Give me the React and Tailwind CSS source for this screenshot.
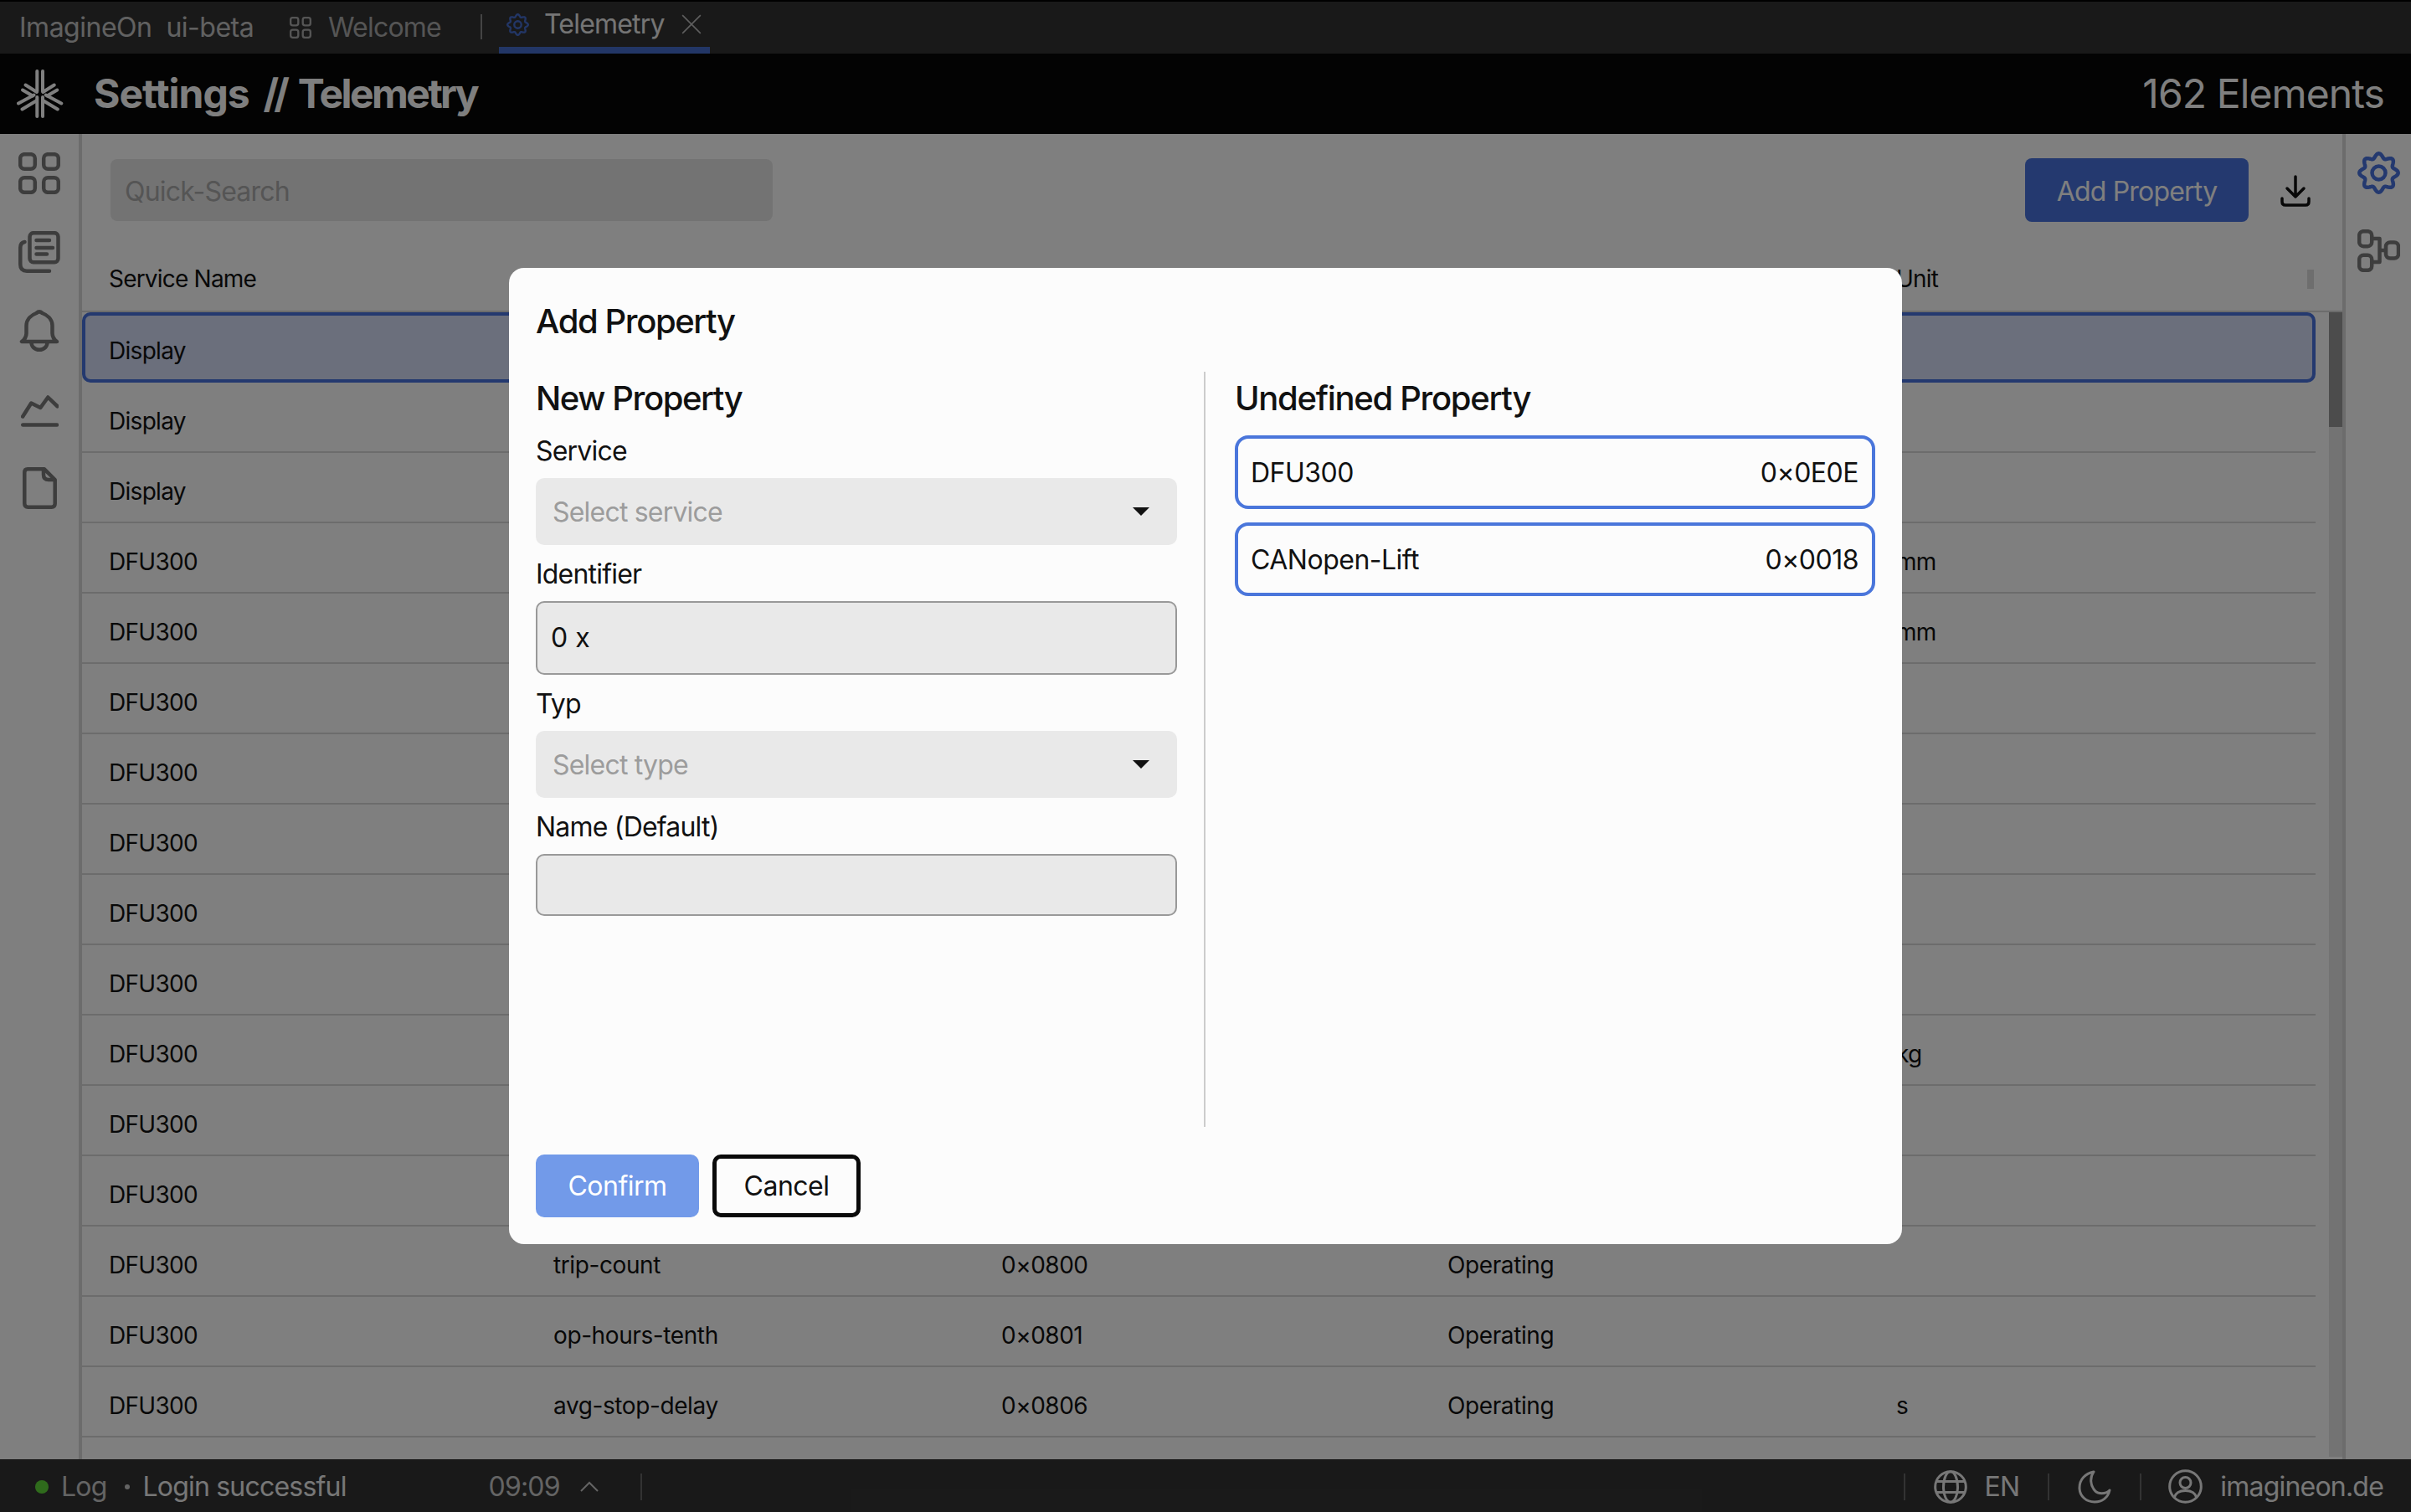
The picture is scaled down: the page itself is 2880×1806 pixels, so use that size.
const FONT = "font-['Inter',sans-serif]";

// the modal covers the middle columns of the upper rows
const ROWS = [
  ["Display", "", "", "", ""],
  ["Display", "", "", "", ""],
  ["Display", "", "", "", ""],
  ["DFU300", "", "", "", "mm"],
  ["DFU300", "", "", "", "mm"],
  ["DFU300", "", "", "", ""],
  ["DFU300", "", "", "", ""],
  ["DFU300", "", "", "", ""],
  ["DFU300", "", "", "", ""],
  ["DFU300", "", "", "", ""],
  ["DFU300", "", "", "", "kg"],
  ["DFU300", "", "", "", ""],
  ["DFU300", "", "", "", ""],
  ["DFU300", "trip-count", "0×0800", "Operating", ""],
  ["DFU300", "op-hours-tenth", "0×0801", "Operating", ""],
  ["DFU300", "avg-stop-delay", "0×0806", "Operating", "s"],
  ["", "", "", "", ""],
];

const gearPath = (() => {
  const pts = [];
  for (let i = 0; i < 240; i++) {
    const t = (i / 240) * Math.PI * 2;
    const r = 20.5 + 2.7 * Math.cos(8 * t);
    pts.push(`${(25.5 + r * Math.sin(t)).toFixed(2)} ${(25.5 - r * Math.cos(t)).toFixed(2)}`);
  }
  return "M" + pts.join("L") + "Z";
})();

const Gear = ({ className, sw = 4.5 }) => (
  <svg viewBox="0 0 51 51" fill="none" stroke="currentColor" strokeWidth={sw} className={className}>
    <path d={gearPath} strokeLinejoin="round" />
    <circle cx="25.5" cy="25.5" r="8" />
  </svg>
);

const GridIcon = ({ className, sw = 4.5 }) => (
  <svg viewBox="0 0 50 50" fill="none" stroke="currentColor" strokeWidth={sw} className={className}>
    <rect x="2.2" y="2.2" width="17.6" height="17.6" rx="5" />
    <rect x="30.2" y="2.2" width="17.6" height="17.6" rx="5" />
    <rect x="2.2" y="30.2" width="17.6" height="17.6" rx="5" />
    <rect x="30.2" y="30.2" width="17.6" height="17.6" rx="5" />
  </svg>
);

const CopyIcon = () => (
  <svg viewBox="0 0 50 50" fill="none" stroke="currentColor" strokeWidth="4.5" strokeLinecap="round" className="w-[50px] h-[50px]">
    <rect x="13.5" y="2.2" width="34" height="35" rx="4.5" />
    <path d="M21.5 11H37M21.5 20H41M21.5 27.5H34" />
    <path d="M7.5 13Q2.3 14 2.3 19.5V40Q2.3 47.7 10 47.7H37" />
  </svg>
);

const BellIcon = () => (
  <svg viewBox="0 0 50 50" fill="none" stroke="currentColor" strokeWidth="4.5" strokeLinecap="round" strokeLinejoin="round" className="w-[50px] h-[50px]">
    <path d="M4 38H46Q40.5 34 40.5 28V19C40.5 11 34 6 28.5 4Q25 .8 21.5 4C16 6 9.5 11 9.5 19V28Q9.5 34 4 38Z" />
    <path d="M15.5 39C15.5 44 19.5 47.7 25 47.7C30.5 47.7 34.5 44 34.5 39" />
  </svg>
);

const ChartIcon = () => (
  <svg viewBox="0 0 45 38" fill="none" stroke="currentColor" strokeWidth="4.5" strokeLinecap="round" strokeLinejoin="round" className="w-[45px] h-[38px] mt-[8px]">
    <path d="M2.2 25.5L12.3 9.5L23.3 15L32.3 2.500L43.5 13.3" />
    <path d="M2.2 35.5H43" />
  </svg>
);

const FileIcon = () => (
  <svg viewBox="0 0 41 50" fill="none" stroke="currentColor" strokeWidth="4.5" strokeLinecap="round" strokeLinejoin="round" className="w-[41px] h-[50px] mt-[4px]">
    <path d="M6 2.3H26L38.7 15V43.5Q38.7 47.7 34.5 47.7H6.5Q2.3 47.7 2.3 43.5V6.5Q2.3 2.3 6 2.3Z" />
    <path d="M25 4V9Q25 15 31 15H37" />
  </svg>
);

const FlowIcon = () => (
  <svg viewBox="0 0 51 51" fill="none" stroke="currentColor" strokeWidth="4.5" strokeLinejoin="round" className="w-[51px] h-[51px]">
    <rect x="2.2" y="2.2" width="15" height="18" rx="5" />
    <rect x="2.2" y="30.8" width="15" height="18" rx="5" />
    <rect x="34" y="15.5" width="15" height="19" rx="5" />
    <path d="M17 11H26.5V39H17M26.5 25H34" />
  </svg>
);

const Logo = () => (
  <svg viewBox="0 0 56 58" fill="none" stroke="currentColor" strokeWidth="4" strokeLinecap="round" className="w-[56px] h-[58px]">
    <path d="M24.300 2V26M31 2V26M24.300 33V56M31 33V56" />
    <path d="M10.500 18.500L24 27M7 24.500L19 31.500M44.800 18.500L31.300 27M48.300 24.500L36.300 31.500" />
    <path d="M2 40.500L20.500 30.500M6.500 47.500L24 37M53.300 40.500L34.800 30.500M48.800 47.500L31.300 37" />
  </svg>
);

const Sep = ({ className }) => <div className={`w-[2px] h-[32px] bg-[#666666] ${className}`} />;

const Field = ({ label, children }) => (
  <div className="mt-[15px]">
    <div className="h-[40px] flex items-center text-[32px] tracking-[-0.8px] text-[#111111]">{label}</div>
    <div className="mt-[12px]">{children}</div>
  </div>
);

const SelectBox = ({ text }) => (
  <div className="h-[80px] bg-[#e9e9e9] rounded-[10px] flex items-center justify-between pl-[20px] pr-[33px]">
    <span className="pt-[2px] text-[32px] tracking-[-0.8px] text-[#9c9c9c]">{text}</span>
    <span className="w-0 h-0 border-x-[10px] border-x-transparent border-t-[10px] border-t-[#111111]" />
  </div>
);

const PropCard = ({ name, id }) => (
  <div className="h-[88px] border-[4px] border-[#4a76db] rounded-[16px] flex items-center justify-between pl-[15px] pr-[16px] pt-[1px] text-[32px] tracking-[-0.5px] text-[#111111]">
    <span>{name}</span>
    <span>{id}</span>
  </div>
);

export default function App() {
  return (
    <div className={`relative w-[2880px] h-[1806px] overflow-hidden flex flex-col bg-white ${FONT}`}>
      {/* tab bar */}
      <div className="h-[64px] bg-[#333333] border-t-2 border-t-black flex items-stretch shrink-0 text-[32px] tracking-[-0.8px]">
        <div className="flex items-center pl-[23px] tracking-[-0.5px] text-[#ffffff] opacity-70 w-[346px]">ImagineOn&nbsp; ui-beta</div>
        <div className="flex items-center gap-[20px] w-[228px] text-[#aaaaaa]">
          <GridIcon className="w-[26px] h-[26px]" sw={4.5} />
          Welcome
        </div>
        <div className="w-[2px] h-[30px] mt-[15px] bg-[#888888]" />
        <div className="ml-[20px] w-[252px] border-b-[8px] border-b-[#4873de] flex items-center pl-[9px] text-[#ffffff] opacity-90">
          <Gear className="w-[27px] h-[27px] text-[#4873de] mr-[18px]" sw={4.5} />
          Telemetry
          <svg viewBox="0 0 24 24" fill="none" stroke="#cccccc" strokeWidth="1.5" className="w-[26px] h-[26px] ml-[19px]">
            <path d="M2 2L22 22M22 2L2 22" />
          </svg>
        </div>
      </div>

      {/* page header */}
      <div className="h-[96px] bg-[#060606] flex items-center justify-between shrink-0 pl-[20px] pr-[32px] text-white">
        <div className="flex items-center gap-[36px]">
          <Logo />
          <div className="flex items-center text-[48px] font-bold">
            <span className="tracking-[-1px]">Settings</span>
            <span className="ml-[17px] tracking-[-6px]">//</span>
            <span className="ml-[16px] tracking-[-2.6px]">Telemetry</span>
          </div>
        </div>
        <span className="text-[48px] tracking-[-0.9px]">162 Elements</span>
      </div>

      {/* body */}
      <div className="flex-1 flex min-h-0">
        <div className="w-[98px] shrink-0 border-r-[4px] border-r-[#d8d8d8] flex flex-col items-center gap-[44px] pt-[22px] text-[#7a7a7a]">
          <GridIcon className="w-[50px] h-[50px]" />
          <CopyIcon />
          <BellIcon />
          <ChartIcon />
          <FileIcon />
        </div>

        <div className="flex-1 min-w-0 flex flex-col">
          <div className="h-[213px] shrink-0 flex flex-col">
            <div className="flex items-center justify-between pl-[34px] pr-[38px] pt-[29px]">
              <div className="w-[791px] h-[74px] bg-[#e6e6e6] rounded-[8px] flex items-center px-[17px] pt-[3px] text-[32px] tracking-[-0.8px] text-[#aaaaaa]">Quick-Search</div>
              <div className="flex items-center gap-[38px]">
                <div className="w-[267px] h-[76px] bg-[#4873de] rounded-[8px] flex items-center justify-center pt-[3px] text-[32px] tracking-[-0.8px] text-white">Add Property</div>
                <svg viewBox="0 0 36 38" fill="none" stroke="#111111" strokeWidth="3.5" strokeLinecap="round" strokeLinejoin="round" className="w-[36px] h-[38px] mt-[2px]">
                  <path d="M18 2V26M8 16L18 26L28 16" />
                  <path d="M2 28V32Q2 36 6 36H30Q34 36 34 32V28" />
                </svg>
              </div>
            </div>
            <div className="mt-auto h-[70px] pb-[8px] flex items-center text-[28px] tracking-[-0.8px] text-[#111111] pl-[32px] pr-[34px] border-b-2 border-b-[#d8d8d8]">
              <span className="w-[2135px]">Service Name</span>
              <span className="flex-1">Unit</span>
              <span className="w-[8px] h-[23px] bg-[#dcdcdc]" />
            </div>
          </div>

          <div className="flex-1 min-h-0 flex">
            <div className="flex-1 min-w-0 pr-[16px]">
              {ROWS.map((r, i) => (
                <div
                  key={i}
                  className={
                    i === 0
                      ? "h-[84px] flex items-center pt-[8px] text-[28px] tracking-[-0.7px] text-[#111111] pl-[28px] bg-[#d6def8] border-[4px] border-[#4873de] rounded-[10px]"
                      : "h-[84px] flex items-center pt-[9px] text-[28px] tracking-[-0.7px] text-[#111111] pl-[32px] border-b-2 border-b-[#d8d8d8]"
                  }
                >
                  <span className="w-[531px]">{r[0]}</span>
                  <span className="w-[535px] tracking-[-0.4px]">{r[1]}</span>
                  <span className="w-[533px] tracking-[-0.5px]">{r[2]}</span>
                  <span className="w-[536px] tracking-[-0.4px]">{r[3]}</span>
                  <span>{r[4]}</span>
                </div>
              ))}
            </div>
            <div className="w-[16px] shrink-0 bg-[#e6e6e6] mb-[3px]">
              <div className="h-[137px] bg-[#999999]" />
            </div>
          </div>
        </div>

        <div className="w-[82px] shrink-0 border-l-[4px] border-l-[#d8d8d8] flex flex-col items-center gap-[42px] pt-[21px] text-[#7a7a7a]">
          <Gear className="w-[51px] h-[51px] text-[#4873de]" />
          <FlowIcon />
        </div>
      </div>

      {/* footer */}
      <div className="h-[63px] bg-[#333333] flex items-center shrink-0 pl-[42px] pr-[33px] pt-[2px] text-[32px] tracking-[-0.8px]">
        <span className="w-[16px] h-[16px] rounded-full bg-[#5ed639]" />
        <span className="ml-[15px] text-[#c8c8c8]">Log</span>
        <span className="ml-[21px] w-[6px] h-[6px] rounded-full bg-[#c8c8c8]" />
        <span className="ml-[16px] text-[#eeeeee] w-[413px]">Login successful</span>
        <span className="text-[#c8c8c8]">09:09</span>
        <svg viewBox="0 0 22 13" fill="none" stroke="#c8c8c8" strokeWidth="2" className="w-[22px] h-[13px] ml-[24px]">
          <path d="M1 12L11 2L21 12" />
        </svg>
        <Sep className="ml-[50px]" />
        <div className="flex-1" />
        <Sep />
        <svg viewBox="0 0 40 40" fill="none" stroke="#eeeeee" strokeWidth="3" className="w-[40px] h-[40px] ml-[34px]">
          <circle cx="20" cy="20" r="18.300" />
          <ellipse cx="20" cy="20" rx="8.500" ry="18.300" />
          <path d="M3 13.500H37M3 26.500H37" />
        </svg>
        <span className="ml-[21px] text-[#eeeeee]">EN</span>
        <Sep className="ml-[34px]" />
        <svg viewBox="0 0 40 40" fill="none" stroke="#eeeeee" strokeWidth="3" strokeLinejoin="round" className="w-[40px] h-[40px] ml-[34px]">
          <path d="M19 2C9 4 2 11 2 21C2 31 10 38 20 38C29 38 36 33 38 24C33 29 24 29 20 24C15 18 14 9 19 2Z" />
        </svg>
        <Sep className="ml-[34px]" />
        <svg viewBox="0 0 41 41" fill="none" stroke="#eeeeee" strokeWidth="3" className="w-[41px] h-[41px] ml-[32px]">
          <circle cx="20.500" cy="20.500" r="18.800" />
          <circle cx="20.500" cy="16" r="6.500" />
          <path d="M7 34C9 27 14 25.500 20.500 25.500C27 25.500 32 27 34 34" />
        </svg>
        <span className="ml-[21px] text-[#eeeeee]">imagineon.de</span>
      </div>

      {/* modal overlay */}
      <div className="absolute inset-0 bg-black/50 flex items-start justify-center pt-[320px]">
        <div className="w-[1664px] h-[1166px] bg-[#fcfcfc] rounded-[18px] px-[32px] pt-[32px] flex flex-col">
          <div className="h-[64px] flex items-center text-[40px] font-medium tracking-[-1.4px] text-[#111111]">Add Property</div>
          <div className="mt-[28px] h-[902px] flex">
            <div className="w-[766px]">
              <div className="h-[60px] pt-[4px] flex items-center text-[40px] font-medium tracking-[-1.4px] text-[#111111]">New Property</div>
              <Field label="Service"><SelectBox text="Select service" /></Field>
              <Field label="Identifier">
                <div className="h-[88px] bg-[#e9e9e9] border-2 border-[#999999] rounded-[10px] flex items-center px-[16px] text-[32px] text-[#111111]">0 x</div>
              </Field>
              <Field label="Typ"><SelectBox text="Select type" /></Field>
              <Field label="Name (Default)">
                <div className="h-[74px] bg-[#e9e9e9] border-2 border-[#999999] rounded-[10px]" />
              </Field>
            </div>
            <div className="w-[2px] bg-[#cccccc] ml-[32px] mr-[35px]" />
            <div className="flex-1">
              <div className="h-[64px] flex items-center text-[40px] font-medium tracking-[-1.3px] text-[#111111]">Undefined Property</div>
              <div className="mt-[12px] flex flex-col gap-[16px]">
                <PropCard name="DFU300" id="0×0E0E" />
                <PropCard name="CANopen-Lift" id="0×0018" />
              </div>
            </div>
          </div>
          <div className="mt-[33px] flex gap-[16px]">
            <div className="w-[195px] h-[75px] bg-[#729ae9] rounded-[10px] flex items-center justify-center text-[32px] tracking-[-0.5px] text-white">Confirm</div>
            <div className="w-[177px] h-[75px] border-[5px] border-[#0a0a0a] rounded-[10px] flex items-center justify-center text-[32px] tracking-[-0.5px] text-[#111111]">Cancel</div>
          </div>
        </div>
      </div>
    </div>
  );
}
